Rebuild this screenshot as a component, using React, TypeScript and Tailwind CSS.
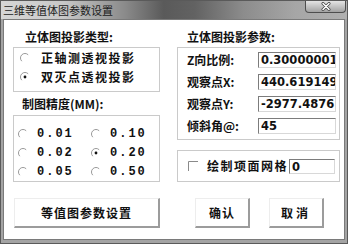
import React from "react";

// classic dialog: 三维等值体图参数设置
const Radio = ({ checked }: { checked?: boolean }) => (
  <svg width="10" height="10" viewBox="0 0 10 10" className="shrink-0">
    <circle cx="5" cy="5" r="4.5" fill="#fff" />
    <path d="M8.2 1.8 A4.5 4.5 0 0 0 1.8 8.2" stroke="#9a9a9a" strokeWidth="1" fill="none" />
    {checked && <circle cx="5" cy="5" r="1.4" fill="#111" />}
  </svg>
);

const Check = () => (
  <svg width="10" height="10" viewBox="0 0 10 10" className="shrink-0">
    <path d="M0.5 10 V0.5 H10" stroke="#8a8a8a" strokeWidth="1" fill="none" />
  </svg>
);

const Field = ({ value, className }: { value: string; className?: string }) => (
  <div
    className={
      "h-[16px] overflow-hidden whitespace-nowrap border border-t-[#7c7c7c] border-l-[#7c7c7c] border-r-[#d8d8d8] border-b-[#d8d8d8] bg-white pl-[2px] font-['DejaVu_Sans',sans-serif] text-[11.5px] font-bold leading-[14px] text-[#111] " +
      (className ?? "")
    }
  >
    {value}
  </div>
);

const Button = ({ label, className }: { label: string; className?: string }) => (
  <button
    className={
      "flex h-[30px] items-center justify-center border border-t-[#ededed] border-l-[#ededed] border-r-2 border-b-2 border-r-[#9c9c9c] border-b-[#9c9c9c] bg-white font-['Noto_Sans_CJK_SC',sans-serif] text-[12px] font-bold tracking-[1px] text-[#111] " +
      (className ?? "")
    }
  >
    {label}
  </button>
);

const precisions = [
  ["0.01", "0.10"],
  ["0.02", "0.20"],
  ["0.05", "0.50"],
];

const params = [
  ["Z向比例:", "0.30000001"],
  ["观察点X:", "440.619149"],
  ["观察点Y:", "-2977.4876"],
  ["倾斜角@:", "45"],
];

export default function App() {
  return (
    <div className="flex h-[244px] w-[348px] flex-col overflow-hidden border border-[#5a5a5a] bg-[#a4a4a4] font-['Noto_Sans_CJK_SC',sans-serif]">
      {/* title bar */}
      <div className="flex h-[18px] shrink-0 items-start justify-between bg-[linear-gradient(90deg,#d6d6d6_0%,#c8c8c8_18%,#8a8a8a_36%,#5a5a5a_47%,#626262_56%,#8c8c8c_70%,#a6a6a6_85%,#b0b0b0_100%)]">
        <span className="pl-[2px] pt-[3px] text-[11px] leading-[12px] text-[#1c1c1c]">三维等值体图参数设置</span>
        <div className="mr-[1px] flex h-[12px] w-[41px] items-center justify-center rounded-b-[4px] border border-t-0 border-[#4e4e4e] bg-[linear-gradient(180deg,#e4e4e4,#a2a2a2)]">
          <svg width="10" height="9" viewBox="0 0 10 9">
            <path d="M2 1.5 L8 7.5 M8 1.5 L2 7.5" stroke="#444" strokeWidth="3" strokeLinecap="round" />
            <path d="M2 1.5 L8 7.5 M8 1.5 L2 7.5" stroke="#fff" strokeWidth="1.5" strokeLinecap="round" />
          </svg>
        </div>
      </div>

      {/* client area */}
      <div className="mx-[2px] mb-[3px] flex flex-1 gap-[17px] border border-[#7a7a7a] bg-white pl-[9px] text-[#111]">
        {/* left column */}
        <div className="flex w-[147px] flex-col">
          <div className="h-[27px] pl-[12px] pt-[10px] text-[12px] font-bold leading-[14px]">立体图投影类型:</div>
          <div className="flex h-[45px] flex-col border border-[#cacaca] pl-[6px]">
            <div className="flex h-[19px] items-center gap-[11px] text-[12px] font-bold tracking-[1.5px]">
              <Radio />
              <span>正轴测透视投影</span>
            </div>
            <div className="flex h-[19px] items-center gap-[11px] text-[12px] font-bold tracking-[1.5px]">
              <Radio checked />
              <span>双灭点透视投影</span>
            </div>
          </div>
          <div className="h-[23px] pl-[9px] pt-[5px] text-[12px] font-bold leading-[14px]">制图精度(MM):</div>
          <div className="h-[67px] border border-[#cacaca] pl-[4px] pt-[8px]">
            {precisions.map((row) => (
              <div key={row[0]} className="grid h-[19px] grid-cols-[73px_1fr] items-center">
                {row.map((v) => (
                  <div key={v} className="flex items-center gap-[9px]">
                    <Radio checked={v === "0.20"} />
                    <span className="font-['Liberation_Mono',monospace] text-[12px] font-bold tracking-[2px]">{v}</span>
                  </div>
                ))}
              </div>
            ))}
          </div>
          <Button label="等值图参数设置" className="ml-[1px] mt-[16px] w-[146px]" />
        </div>

        {/* right column */}
        <div className="flex w-[163px] flex-col">
          <div className="h-[27px] pl-[10px] pt-[10px] text-[12px] font-bold leading-[14px]">立体图投影参数:</div>
          <div className="flex h-[93px] flex-col gap-[6px] border border-[#cacaca] pl-[9px] pt-[4px]">
            {params.map(([label, value]) => (
              <div key={label} className="flex h-[16px] items-center">
                <span className="w-[71px] text-[12px] font-bold leading-[14px]">{label}</span>
                <Field value={value} className="w-[78px]" />
              </div>
            ))}
          </div>
          <div className="mt-[10px] flex h-[32px] items-center border border-[#cacaca] pl-[10px] pr-[4px]">
            <Check />
            <span className="ml-[9px] text-[12px] font-bold tracking-[1.5px]">绘制项面网格</span>
            <Field value="0" className="ml-auto !h-[15px] w-[46px]" />
          </div>
          <div className="mt-[16px] flex gap-[19px] pl-[18px]">
            <Button label="确认" className="w-[55px]" />
            <Button label="取消" className="w-[55px] tracking-[3px]" />
          </div>
        </div>
      </div>
    </div>
  );
}
